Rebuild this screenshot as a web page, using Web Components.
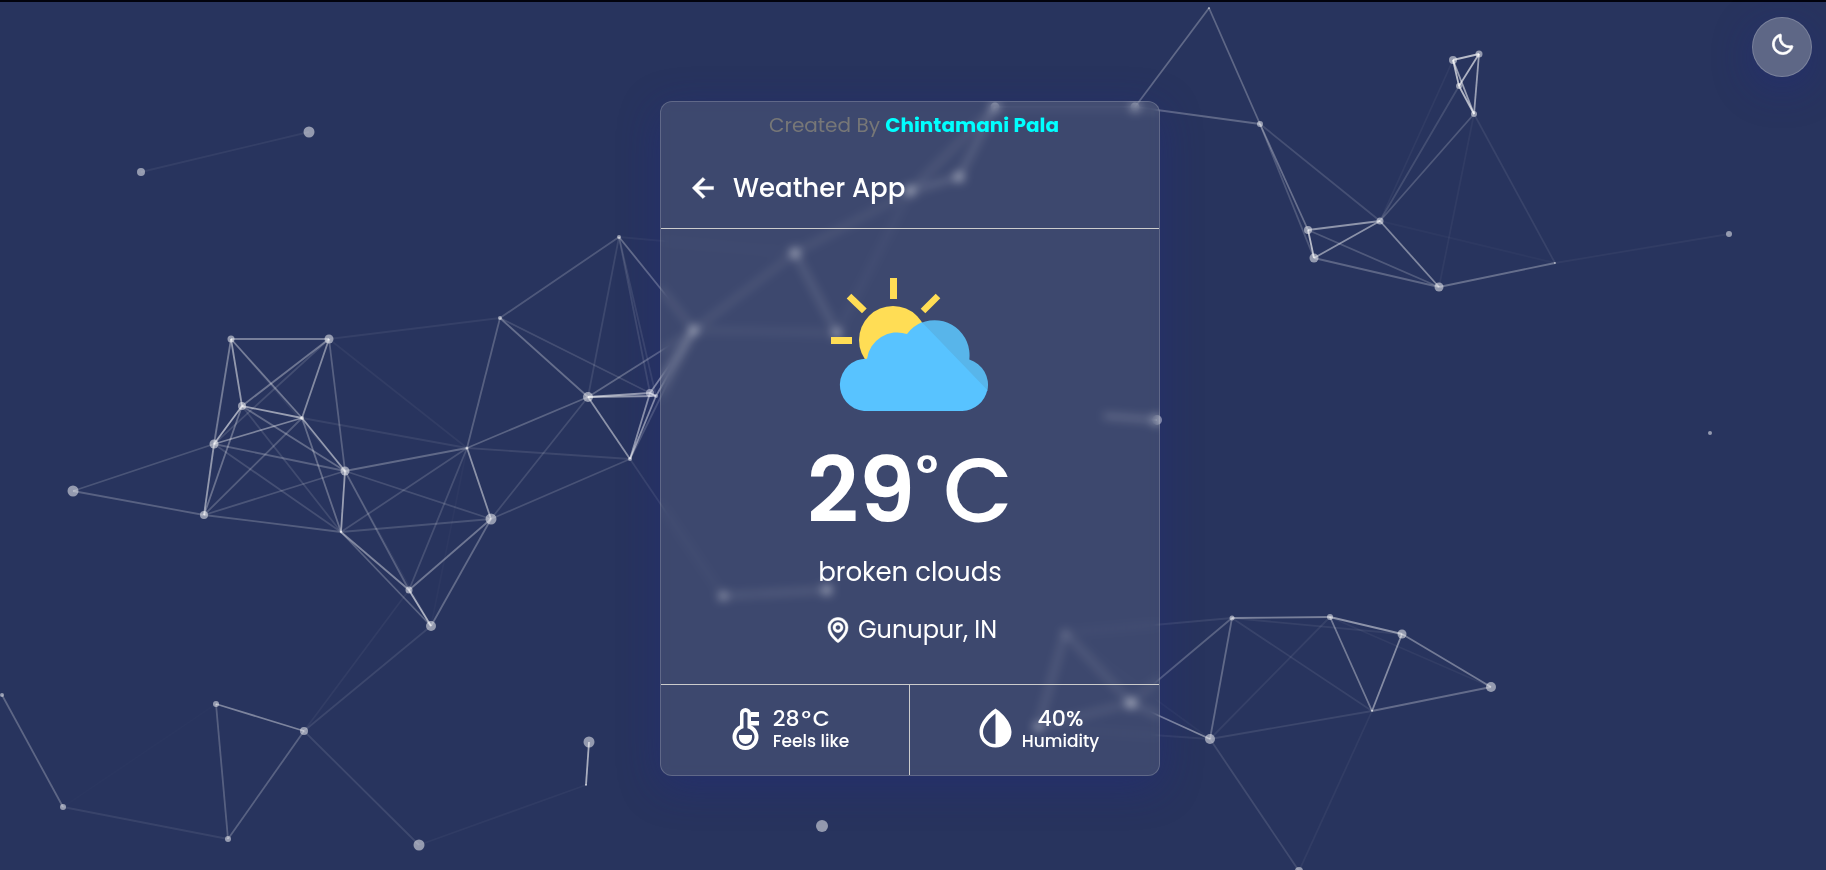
<!DOCTYPE html>
<html lang="en">
<head>
<meta charset="utf-8">
<title>Weather App</title>
<style>
  html, body { margin: 0; min-height: 100%; }
  body { background: #28345e; font-family: Poppins, Inter, "Open Sans", sans-serif; color: #fff; }
</style>
</head>
<body>
<weather-page>
  <particle-field></particle-field>
  <theme-toggle></theme-toggle>
  <weather-card>
    <card-credit slot="top" name="Chintamani Pala">Created By</card-credit>
    <card-header slot="top">Weather App</card-header>
    <weather-now degrees="29" place="Gunupur, IN">broken clouds</weather-now>
    <weather-detail slot="details" value="28" unit="C" label="Feels like" icon="thermometer"></weather-detail>
    <weather-detail slot="details" value="40%" label="Humidity" icon="droplet" centered></weather-detail>
  </weather-card>
</weather-page>
<script>
const define = (name, html, setup) => {
  const template = document.createElement('template');
  template.innerHTML = html;
  customElements.define(name, class extends HTMLElement {
    constructor() {
      super();
      this.attachShadow({ mode: 'open' }).append(template.content.cloneNode(true));
    }
    connectedCallback() { if (setup) setup(this, this.shadowRoot); }
  });
};

define('weather-page', `
<style>
  :host { display: flex; flex-direction: column; align-items: center; justify-content: center;
    box-sizing: border-box; min-height: 100vh; padding: 4px 6px 0 0; border-top: 2px solid #02030d; }
</style><slot></slot>`);

define('particle-field', `
<style>
  :host { position: fixed; inset: 2px 0 0; }
  svg { display: block; width: 100%; height: 100%; }
</style>
<svg viewBox="0 2 1826 868" preserveAspectRatio="xMidYMid slice" aria-hidden="true"></svg>`, (host, root) => {
  // x, y, radius of each particle
  const dots = [
    [309,132,5.5],[141,172,4],[231,339,3.5],[329,339,4.5],[242,406,4],[302,418,2],[214,444,4.5],[204,515,4],
    [345,471,4.5],[341,532,1.2],[467,448,1.5],[491,519,5.5],[409,590,3.5],[431,626,5],[73,491,5.5],
    [500,318,2],[619,237,2],[588,397,5],[650,393,4],[656,396,2],[630,459,2],
    [795,253,5],[910,191,5],[959,177,5],[995,107,4.5],[1135,107,4.5],[694,330,4.5],[837,333,4.5],
    [1157,420,5],[1105,416,1],[723,596,4],[827,590,5],[1065,633,2],[1131,703,5.5],[1038,727,4],
    [1209,8,1],[1260,124,3],[1453,60,4],[1479,54,3.5],[1459,86,3],[1474,114,3],[1308,230,4],[1314,258,4.5],
    [1380,221,3.5],[1439,287,4.5],[1555,263,1],[1729,234,3],
    [1232,618,2.5],[1330,617,3],[1402,634,4.5],[1491,687,5],[1372,711,1],[1210,739,5],[1299,871,4],
    [2,695,2],[63,807,3],[216,704,3],[228,839,3],[304,731,4],[419,845,5.5],[589,742,5.5],[586,785,1],
    [822,826,6],[1710,433,2]];
  const reach = 187;
  let out = '';
  dots.forEach(([x, y, r], i) => {
    out += `<circle cx="${x}" cy="${y}" r="${r}" fill="#fff" fill-opacity=".5"/>`;
    dots.slice(i + 1).forEach(([u, v]) => {
      const d = Math.hypot(u - x, v - y);
      if (d < reach) out += `<line x1="${x}" y1="${y}" x2="${u}" y2="${v}" stroke="#fff" stroke-width="1.8" stroke-opacity="${(.78 * (1 - d / reach)).toFixed(3)}"/>`;
    });
  });
  root.querySelector('svg').innerHTML = out;
});

define('theme-toggle', `
<style>
  :host { position: absolute; top: 17px; right: 14px; }
  button { display: flex; justify-content: center; box-sizing: border-box; width: 60px; height: 60px; padding: 14px 0 0;
    border: 1px solid rgba(255,255,255,.18); border-radius: 50%; background: rgba(255,255,255,.25); color: #fff;
    box-shadow: 0 10px 40px rgba(31,38,135,.37); cursor: pointer; }
  svg { width: 25px; height: 25px; fill: currentColor; stroke: currentColor; stroke-width: .7; }
</style>
<button type="button" aria-label="Toggle theme"><svg viewBox="0 0 24 24"><path d="M20.742 13.045a8.088 8.088 0 0 1-2.077.271c-2.135 0-4.14-.83-5.646-2.336a8.025 8.025 0 0 1-2.064-7.723A1 1 0 0 0 9.73 2.034a10.014 10.014 0 0 0-4.489 2.582c-3.898 3.898-3.898 10.243 0 14.143a9.937 9.937 0 0 0 7.072 2.93 9.93 9.93 0 0 0 7.07-2.929 10.007 10.007 0 0 0 2.583-4.491 1.001 1.001 0 0 0-1.224-1.224zm-2.772 4.301a7.947 7.947 0 0 1-5.656 2.343 7.953 7.953 0 0 1-5.658-2.344c-3.118-3.119-3.118-8.195 0-11.314a7.923 7.923 0 0 1 2.06-1.483 10.027 10.027 0 0 0 2.89 7.848 9.972 9.972 0 0 0 7.848 2.891 8.036 8.036 0 0 1-1.484 2.059z"/></svg></button>`);

define('weather-card', `
<style>
  :host { display: block; position: relative; box-sizing: border-box; width: 500px; max-width: 96vw;
    border: 1px solid rgba(255,255,255,.18); border-radius: 12px; background: rgba(255,255,255,.1);
    backdrop-filter: blur(5px); box-shadow: 0 10px 40px rgba(31,38,135,.37); }
  header { border-bottom: 1px solid #ccc; }
  footer { display: grid; grid-template-columns: 1fr 1fr; border-top: 1px solid #ccc; }
</style>
<header><slot name="top"></slot></header>
<slot></slot>
<footer><slot name="details"></slot></footer>`);

define('card-credit', `
<style>
  :host { display: block; padding: 8px 0 8px 8px; text-align: center; font-size: 20px; line-height: 30px; color: #777; }
  a { color: #0ff; font-weight: 700; text-decoration: none; }
</style><slot></slot> <a href="#"></a>`, (host, root) => {
  root.querySelector('a').textContent = host.getAttribute('name');
});

define('card-header', `
<style>
  :host { display: flex; align-items: center; gap: 10px; padding: 20px 24px; }
  button { display: flex; padding: 0; border: 0; background: none; color: #fff; cursor: pointer; }
  svg { width: 38px; height: 38px; fill: currentColor; stroke: currentColor; stroke-width: .3; }
  h1 { margin: 0; font-size: 26px; line-height: 40px; font-weight: 500; }
</style>
<button type="button" aria-label="Back"><svg viewBox="0 0 24 24"><path d="M12.707 17.293 8.414 13H18v-2H8.414l4.293-4.293-1.414-1.414L4.586 12l6.707 6.707z"/></svg></button>
<h1><slot></slot></h1>`);

define('weather-now', `
<style>
  :host { display: flex; flex-direction: column; align-items: center; padding: 37px 0 34px; }
  .art { width: 188px; height: 156px; }
  .temp { display: flex; margin-top: 14px; font-size: 90px; line-height: 110px; font-weight: 600; }
  .deg { margin: 0 5px 0 1px; font-size: 50px; line-height: 74px; }
  .unit { font-weight: 500; }
  .text { margin-top: 6px; font-size: 26px; line-height: 40px; }
  .place { display: flex; align-items: center; gap: 5px; margin-top: 18px; font-size: 24px; line-height: 40px; }
  .place svg { width: 30px; height: 30px; fill: currentColor; stroke: currentColor; stroke-width: .4; }
</style>
<svg class="art" viewBox="816 266 188 156" aria-hidden="true">
  <g fill="#ffdd55"><circle cx="893" cy="340" r="34"/>
    <path d="M890 278h7v21h-7zM831 337h21v7h-21zM851.3 293.7l15.4 14.8-4.7 4.8-15.3-14.8zM935.7 293.7l4.6 4.6-15 15-4.6-4.6z"/></g>
  <path fill="#58b5ea" d="M921 323A35 35 0 0 1 969.3 359.5A26.5 26.5 0 0 1 987.3 391L960 400z"/>
  <path fill="#58c3ff" d="M864 411a26.2 26.2 0 0 1 3-52.3a30.5 30.5 0 0 1 40-24.7a35 35 0 0 1 15-11.7L987.3 390a26.5 26.5 0 0 1-25 21z"/>
</svg>
<div class="temp"><span class="num"></span><span class="deg">°</span><span class="unit">C</span></div>
<div class="text"><slot></slot></div>
<div class="place"><svg viewBox="0 0 24 24" aria-hidden="true"><path d="M12 14c2.206 0 4-1.794 4-4s-1.794-4-4-4-4 1.794-4 4 1.794 4 4 4zm0-6c1.103 0 2 .897 2 2s-.897 2-2 2-2-.897-2-2 .897-2 2-2z"/><path d="M11.42 21.814a.998.998 0 0 0 1.16 0C12.884 21.599 20.029 16.44 20 10c0-4.411-3.589-8-8-8S4 5.589 4 9.995c-.029 6.445 7.116 11.604 7.42 11.819zM12 4c3.309 0 6 2.691 6 6.005.021 4.438-4.388 8.423-6 9.73-1.611-1.308-6.021-5.294-6-9.735 0-3.309 2.691-6 6-6z"/></svg><span></span></div>`, (host, root) => {
  root.querySelector('.num').textContent = host.getAttribute('degrees');
  root.querySelector('.place span').textContent = host.getAttribute('place');
});

const detailIcons = {
  thermometer: '<path fill-rule="evenodd" d="M19 9.5a5.5 5.5 0 0 1 11 0V21.2a13 13 0 1 1-11 0zM22.5 10V24.2a9 9 0 1 0 4 0V10a2 2 0 0 0-4 0z"/><path d="M30 8h8v5h-8zM30 17h8v4.500h-8zM18 31h13v2.500a6.500 6.500 0 0 1-13 0z"/>',
  droplet: '<path fill-rule="evenodd" d="M25.500 4.500C23 6 9.500 16 9.500 28a16 15.500 0 0 0 32 0C41.500 16 28 6 25.500 4.500zM25.500 9.500C20 14 13 20.500 13 28a12.500 12 0 0 0 12.500 12z"/>'
};
define('weather-detail', `
<style>
  :host { display: flex; align-items: center; justify-content: center; gap: 2px; box-sizing: border-box; height: 90px; padding-bottom: 2px; font-weight: 500; }
  :host(:first-of-type) { border-right: 1px solid #ccc; }
  :host([centered]) { text-align: center; }
  svg { width: 50px; height: 50px; fill: currentColor; }
  .value { font-size: 22px; line-height: 24px; }
  .value span { margin: 0 2px; }
  .label { font-size: 17px; line-height: 20px; }
</style>
<svg viewBox="0 0 50 50" aria-hidden="true"></svg>
<div><div class="value"></div><div class="label"></div></div>`, (host, root) => {
  const unit = host.getAttribute('unit');
  root.querySelector('svg').innerHTML = detailIcons[host.getAttribute('icon')];
  root.querySelector('.value').innerHTML = host.getAttribute('value') + (unit ? `<span>°</span>${unit}` : '');
  root.querySelector('.label').textContent = host.getAttribute('label');
});
</script>
</body>
</html>
